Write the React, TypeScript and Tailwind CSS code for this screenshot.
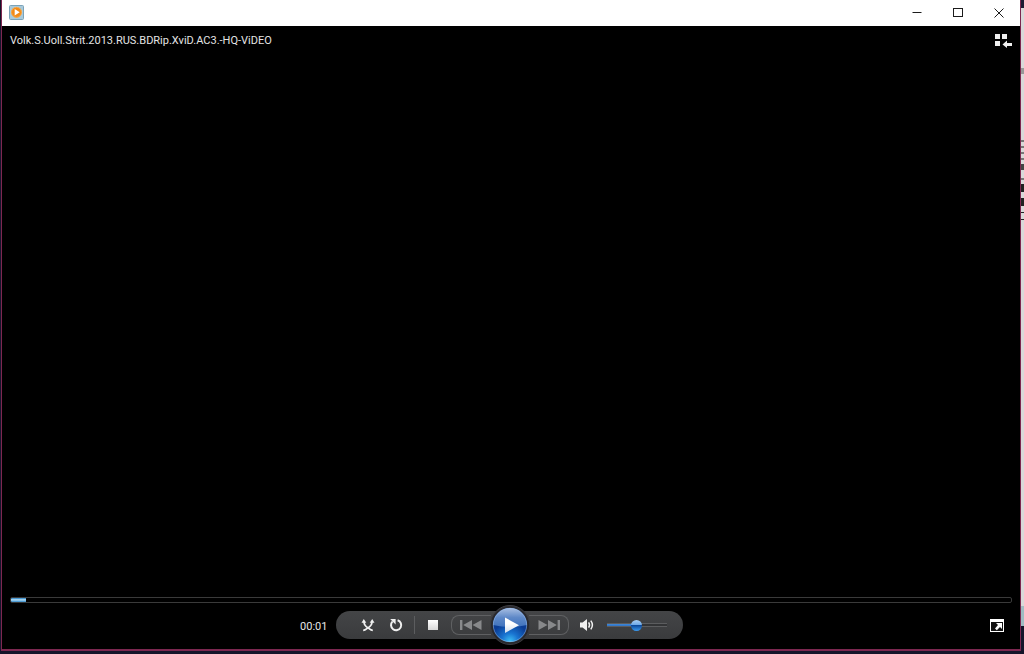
import { useState } from 'react';

const captionButton = 'flex h-[26px] w-[41px] items-center justify-center text-[#1c1c1c]';
const controlButton = 'flex h-6 w-6 items-center justify-center text-[#f0f0f0]';

function TitleBar() {
  return (
    <header className="flex h-[26px] items-center justify-between bg-white pr-px pl-[7px]">
      <svg viewBox="0 0 15 15" className="mb-0.5 h-[15px] w-[15px]" aria-hidden="true">
        <rect x="0.5" y="0.5" width="14" height="14" rx="1" fill="#a9cadb" stroke="#7ba3b9" />
        <circle cx="7.5" cy="7.3" r="5.4" fill="#f28a17" />
        <circle cx="7.5" cy="7.3" r="5" fill="none" stroke="#f9b35c" strokeWidth="0.7" />
        <path d="M5.7 4v6.6l5-3.3z" fill="#fff" />
      </svg>
      <div className="flex">
        <button aria-label="Minimize" className={captionButton}>
          <svg viewBox="0 0 10 10" className="h-2.5 w-2.5" stroke="currentColor">
            <path d="M0.5 4.5h9" />
          </svg>
        </button>
        <button aria-label="Maximize" className={captionButton}>
          <svg viewBox="0 0 10 10" className="h-2.5 w-2.5" fill="none" stroke="currentColor">
            <rect x="0.5" y="0.5" width="9" height="8" />
          </svg>
        </button>
        <button aria-label="Close" className={captionButton}>
          <svg viewBox="0 0 10 10" className="h-2.5 w-2.5" stroke="currentColor">
            <path d="M0.5 0.5l9 9M9.5 0.5l-9 9" />
          </svg>
        </button>
      </div>
    </header>
  );
}

function SeekBar() {
  const [position, setPosition] = useState(1.5);

  return (
    <input
      type="range"
      aria-label="Seek"
      min={0}
      max={100}
      step={0.1}
      value={position}
      onChange={(e) => setPosition(Number(e.target.value))}
      className="block h-1.5 w-full appearance-none rounded-xs border border-[#3a3a3a] bg-black bg-[linear-gradient(to_bottom,#1f7cc4,#b9e2f8_45%,#2f87c9)] bg-no-repeat [&::-webkit-slider-thumb]:h-px [&::-webkit-slider-thumb]:w-px [&::-webkit-slider-thumb]:appearance-none"
      style={{ backgroundSize: `${position}% 100%` }}
    />
  );
}

function VolumeSlider() {
  const [volume, setVolume] = useState(50);

  return (
    <input
      type="range"
      aria-label="Volume"
      value={volume}
      onChange={(e) => setVolume(Number(e.target.value))}
      className="block h-1 w-[60px] appearance-none border-y border-[#5c5d5f] bg-[#333436] bg-[linear-gradient(#4c94e0,#2467bd)] bg-no-repeat bg-origin-border [&::-webkit-slider-thumb]:h-[11px] [&::-webkit-slider-thumb]:w-[11px] [&::-webkit-slider-thumb]:appearance-none [&::-webkit-slider-thumb]:rounded-full [&::-webkit-slider-thumb]:bg-[linear-gradient(#a9cff5_0%,#6ca7e6_45%,#0d4a9c_50%,#3b9bf0_100%)]"
      style={{ backgroundSize: `${volume}% 100%` }}
    />
  );
}

function PlayButton() {
  return (
    <button aria-label="Play" className="relative z-10 -mx-px flex h-10 w-10 items-center justify-center">
      <svg viewBox="0 0 40 40" className="h-10 w-10">
        <defs>
          <linearGradient id="orbTop" x1="0" y1="0" x2="0" y2="1">
            <stop offset="0" stopColor="#a9bfe2" />
            <stop offset="0.5" stopColor="#5f89c8" />
            <stop offset="1" stopColor="#3f72bd" />
          </linearGradient>
          <radialGradient id="orbBase" cx="0.5" cy="0.98" r="0.55">
            <stop offset="0" stopColor="#3fc0f5" />
            <stop offset="0.45" stopColor="#1873d0" />
            <stop offset="1" stopColor="#0b3c94" />
          </radialGradient>
          <linearGradient id="playFace" x1="0" y1="0" x2="0" y2="1">
            <stop offset="0.4" stopColor="#ffffff" />
            <stop offset="1" stopColor="#cfdcec" />
          </linearGradient>
        </defs>
        <circle cx="20" cy="20" r="19.5" fill="#29292d" stroke="#3c3c40" />
        <circle cx="20" cy="20" r="17" fill="url(#orbBase)" />
        <path d="M3 20a17 17 0 0 1 34 0Q20 24 3 20z" fill="url(#orbTop)" />
        <circle cx="20" cy="20" r="16.7" fill="none" stroke="#a5c4eb" strokeOpacity="0.6" strokeWidth="0.8" />
        <path d="M15 12.5v15.5l14-7.7z" fill="url(#playFace)" />
      </svg>
    </button>
  );
}

function Controls() {
  return (
    <div className="flex h-7 items-center rounded-full bg-linear-to-b from-[#444547] to-[#3a3b3d] pr-4 pl-5">
      <button aria-label="Shuffle" className={controlButton}>
        <svg viewBox="0 0 14 14" className="h-3.5 w-3.5" fill="none" stroke="currentColor" strokeWidth="1.7">
          <path d="M3 3.5C3 8 5.500 8.800 7 9.800s2.500 2.500 4.800 2.500M11 3.500C11 8 8.500 8.800 7 9.800s-2.500 2.500-4.800 2.500" />
          <path d="M2.800 1L0.500 4.800h4.800zM11.200 1L8.700 4.800h4.800z" fill="currentColor" stroke="none" />
        </svg>
      </button>
      <button aria-label="Repeat" className={`${controlButton} ml-1`}>
        <svg viewBox="0 0 14 14" className="h-3.5 w-3.5" fill="none" stroke="currentColor" strokeWidth="2">
          <path d="M8.6 2.2a5.1 5.1 0 1 1-5 1.2" />
          <path d="M1.2 1h5.4v5.4z" fill="currentColor" stroke="none" />
        </svg>
      </button>
      <span className="mx-1.5 h-[18px] w-px bg-[#5c5d5f]" />
      <button aria-label="Stop" className={controlButton}>
        <span className="h-2.5 w-2.5 bg-linear-to-b from-white to-[#d8d8d8]" />
      </button>
      <button
        aria-label="Previous"
        className="ml-1.5 flex h-5 w-10 items-center rounded-l-lg border border-r-0 border-[#5f6062] pl-2 text-[#88898b]"
      >
        <svg viewBox="0 0 22 10" className="h-2.5 w-[22px]" fill="currentColor">
          <path d="M0 0h2.4v10H0zM12 0v10L3.2 5zM21.5 0v10L12.5 5z" />
        </svg>
      </button>
      <PlayButton />
      <button
        aria-label="Next"
        className="flex h-5 w-10 items-center justify-end rounded-r-lg border border-l-0 border-[#5f6062] pr-2 text-[#88898b]"
      >
        <svg viewBox="0 0 22 10" className="h-2.5 w-[22px]" fill="currentColor">
          <path d="M19.6 0H22v10h-2.4zM10 0v10l8.8-5zM0.5 0v10l9-5z" />
        </svg>
      </button>
      <button aria-label="Mute" className={`${controlButton} mr-2 ml-1.5`}>
        <svg viewBox="0 0 14 12" className="h-3 w-3.5" fill="none" stroke="currentColor">
          <path d="M0 3.5h2.6L7 0v12L2.6 8.5H0z" fill="currentColor" stroke="none" />
          <path d="M8.6 3.4q1.8 2.6 0 5.2" strokeWidth="1.5" />
          <path d="M10.8 1.6q3.2 4.4 0 8.8" strokeWidth="1.5" />
        </svg>
      </button>
      <VolumeSlider />
    </div>
  );
}

// Sliver of the window that sits behind the player
function BackgroundWindow() {
  return (
    <aside className="flex w-[3px] flex-col bg-[#d9d9d9]" aria-hidden="true">
      <div className="h-2 bg-[#1d1a33]" />
      <div className="mt-[60px] h-1.5 bg-[#999999]" />
      <div className="mt-[66px] h-0.5 bg-[#777777]" />
      <div className="mt-1 h-0.5 bg-[#777777]" />
      <div className="mt-1 h-0.5 bg-[#777777]" />
      <div className="mt-1 h-0.5 bg-[#777777]" />
      <div className="mt-1 h-1.5 bg-[#444444]" />
      <div className="mt-2 h-0.5 bg-[#777777]" />
      <div className="mt-1 h-2 bg-[#222222]" />
      <div className="mt-1.5 h-2 bg-[#222222]" />
      <div className="mt-1.5 h-px bg-[#222222]" />
      <div className="mt-1.5 h-px bg-[#222222]" />
      <div className="flex-1" />
      <div className="h-5 bg-[#9fbcc2]" />
      <div className="h-7 bg-[#15142a]" />
    </aside>
  );
}

export default function App() {
  return (
    <div className="flex h-screen bg-[#15142a] pl-px font-[Roboto,'Open_Sans',sans-serif]">
      <div className="flex min-w-0 flex-1 flex-col pb-[3px]">
        <div className="flex flex-1 flex-col border-x border-b-2 border-[#7d2750] bg-black">
          <TitleBar />

          {/* Video surface */}
          <main className="flex flex-1 items-start justify-between pt-1.5 pr-2 pl-2">
            <h1 className="text-[11px] leading-[18px] text-[#e4e4e4]">
              Volk.S.Uoll.Strit.2013.RUS.BDRip.XviD.AC3.-HQ-ViDEO
            </h1>
            <button aria-label="Switch to Library" className="mt-0.5 text-[#f0f0f0]">
              <svg viewBox="0 0 17 14" className="h-3.5 w-[17px]" fill="currentColor">
                <path d="M0 0h5v5H0zM7 0h5v5H7zM0 7h5v5H0z" />
                <path d="M12 6.5V9h5v3h-5v2L7.5 10.4z" />
              </svg>
            </button>
          </main>

          <footer className="px-2 pb-1">
            <SeekBar />
            <div className="mt-0.5 grid h-10 grid-cols-[1fr_auto_1fr] items-center pr-1">
              <time className="pt-1 pr-2 text-right text-[11px] leading-[18px] text-[#e4e4e4]">00:01</time>
              <Controls />
              <button aria-label="View full screen" className="mr-1 justify-self-end text-white">
                <svg viewBox="0 0 14 13" className="h-[13px] w-3.5">
                  <rect x="0.5" y="0.5" width="13" height="12" fill="#111" stroke="currentColor" />
                  <path d="M0 0h14v3H0z" fill="currentColor" />
                  <path d="M6 4h6v6l-2-2-3.2 3.2-1.8-1.8L8 6z" fill="currentColor" />
                </svg>
              </button>
            </div>
          </footer>
        </div>
      </div>
      <BackgroundWindow />
    </div>
  );
}
